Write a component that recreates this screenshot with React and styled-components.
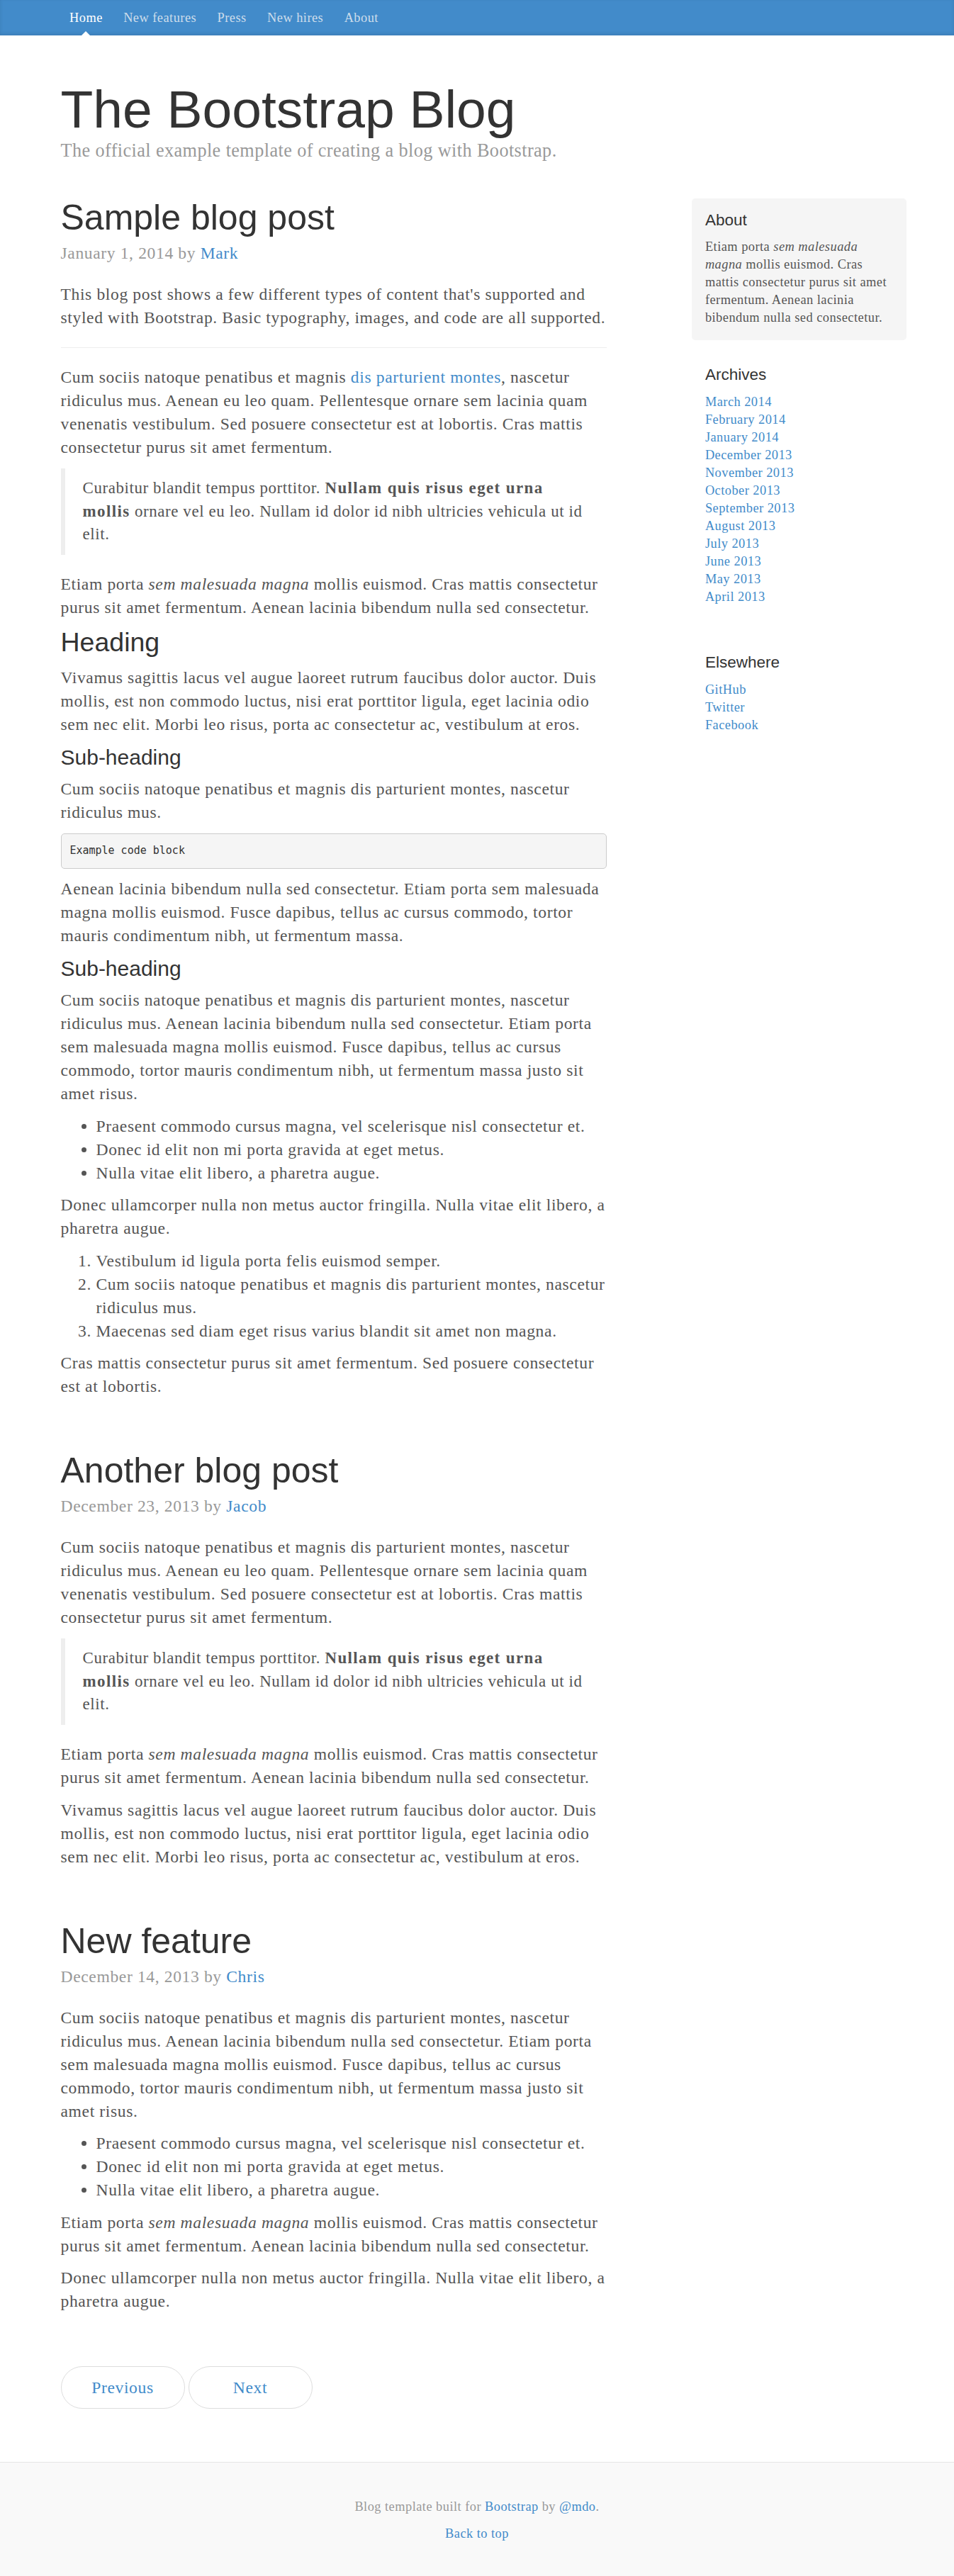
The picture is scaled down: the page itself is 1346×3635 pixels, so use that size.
import React from 'react'
import styled, { createGlobalStyle, css } from 'styled-components'

// the reference is Bootstrap's blog example seen at 125%, so every value is the bootstrap one * 1.25
// Georgia is missing here: Liberation Serif a little larger and tracked out keeps the same line breaks

const GlobalStyle = createGlobalStyle`
  * { box-sizing: border-box; }
  body {
    margin: 0;
    background: #fff;
    color: #555;
    font-family: "Liberation Serif", "Times New Roman", serif;
  }
  a { color: #428bca; text-decoration: none; }
`

const serif = (size, track = 0.027) => css`
  font-size: ${size * 1.05}px;
  letter-spacing: ${(size * track).toFixed(2)}px;
`

const sans = css`
  font-family: "Liberation Sans", Arial, sans-serif;
  font-weight: 400;
  color: #333;
  letter-spacing: 0;
`

const Masthead = styled.div`
  background-color: #428bca;
  box-shadow: inset 0 -2px 5px rgba(0, 0, 0, 0.1);
`

const Container = styled.div`
  width: 1212.5px;
  margin: 0 auto;
  padding: 0 18.75px;
`

const Nav = styled.nav`
  display: flex;
  gap: 4.4px;
`

const NavItem = styled.a`
  position: relative;
  display: block;
  padding: 12.5px;
  ${serif(17.5)}
  line-height: 25px;
  color: ${(p) => (p.$active ? '#fff' : '#cdddeb')};

  ${(p) =>
    p.$active &&
    css`
      &::after {
        content: '';
        position: absolute;
        bottom: 0;
        left: 50%;
        margin-left: -6.25px;
        border-style: solid;
        border-color: transparent;
        border-width: 0 6.25px 6.25px;
        border-bottom-color: #fff;
      }
    `}
`

const Header = styled.header`
  padding: 25px 0;
`

const BlogTitle = styled.h1`
  ${sans}
  margin: 37.5px 0 0;
  font-size: 75px;
  line-height: 82.5px;
`

const Description = styled.p`
  margin: 0 0 25px;
  ${serif(25, 0.016)}
  line-height: 35px;
  color: #999;
`

const Row = styled.div`
  display: grid;
  grid-template-columns: 770.8px 265.6px;
  column-gap: 138.6px;
  align-items: start;
`

const Main = styled.main`
  ${serif(22.5)}
  line-height: 33px;
`

const Post = styled.article`
  margin-bottom: 75px;
`

const PostTitle = styled.h2`
  ${sans}
  margin: 0 0 6.25px;
  font-size: 50px;
  line-height: 55px;
`

const Meta = styled.p`
  margin: 0 0 25px;
  color: #999;
`

const P = styled.p`
  margin: 0 0 12.5px;
`

const Rule = styled.hr`
  margin: 25px 0;
  border: 0;
  border-top: 1px solid #eee;
`

const Quote = styled.blockquote`
  margin: 0 0 25px;
  padding: 12.5px 25px;
  border-left: 6.25px solid #eee;
  ${serif(21.875)}
  line-height: 32.4px;

  & p {
    margin: 0;
  }
  & strong {
    letter-spacing: 1.4px;
  }
`

const Heading = styled.h2`
  ${sans}
  margin: 0 0 12.5px;
  font-size: 37.5px;
  line-height: 41.25px;
`

const SubHeading = styled.h3`
  ${sans}
  margin: 0 0 12.5px;
  font-size: 30px;
  line-height: 33px;
`

const Code = styled.pre`
  margin: 0 0 12.5px;
  padding: 11.875px;
  font-family: "Liberation Mono", "DejaVu Sans Mono", monospace;
  font-size: 15px;
  line-height: 23.2px;
  letter-spacing: 0;
  color: #333;
  background-color: #f5f5f5;
  border: 1px solid #ccc;
  border-radius: 5px;
`

const listStyle = css`
  margin: 0 0 12.5px;
  padding-left: 50px;
`
const Bullets = styled.ul`
  ${listStyle}
`
const Numbers = styled.ol`
  ${listStyle}
`

const Pager = styled.ul`
  display: flex;
  gap: 5px;
  margin: 25px 0 75px;
  padding: 0;
  list-style: none;
`

const PagerLink = styled.a`
  display: block;
  width: 175px;
  padding: 12.5px 25px;
  text-align: center;
  background-color: #fff;
  border: 1px solid #ddd;
  border-radius: 37.5px;
`

const Sidebar = styled.aside`
  ${serif(17.5)}
  line-height: 25px;
`

const Module = styled.div`
  margin: 0 -18.75px 18.75px;
  padding: 18.75px;
  ${(p) =>
    p.$inset &&
    css`
      background-color: #f5f5f5;
      border-radius: 5px;
    `}

  & p {
    margin: 0;
  }
`

const ModuleTitle = styled.h4`
  ${sans}
  margin: 0 0 12.5px;
  font-size: 22.5px;
  line-height: 24.75px;
`

const LinkList = styled.ol`
  margin: 0 0 12.5px;
  padding: 0;
  list-style: none;
`

const Footer = styled.footer`
  padding: 50px 0;
  ${serif(17.5)}
  line-height: 25px;
  color: #999;
  text-align: center;
  background-color: #f9f9f9;
  border-top: 1px solid #e5e5e5;

  & p {
    margin: 0 0 12.5px;
  }
  & p:last-child {
    margin-bottom: 0;
  }
`

const navItems = ['Home', 'New features', 'Press', 'New hires', 'About']

const archives = [
  'March 2014',
  'February 2014',
  'January 2014',
  'December 2013',
  'November 2013',
  'October 2013',
  'September 2013',
  'August 2013',
  'July 2013',
  'June 2013',
  'May 2013',
  'April 2013',
]

const elsewhere = ['GitHub', 'Twitter', 'Facebook']

const cumSociis =
  'Cum sociis natoque penatibus et magnis dis parturient montes, nascetur ridiculus mus. Aenean lacinia bibendum nulla sed consectetur. Etiam porta sem malesuada magna mollis euismod. Fusce dapibus, tellus ac cursus commodo, tortor mauris condimentum nibh, ut fermentum massa justo sit amet risus.'

const vivamus =
  'Vivamus sagittis lacus vel augue laoreet rutrum faucibus dolor auctor. Duis mollis, est non commodo luctus, nisi erat porttitor ligula, eget lacinia odio sem nec elit. Morbi leo risus, porta ac consectetur ac, vestibulum at eros.'

function Blockquote() {
  return (
    <Quote>
      <p>
        Curabitur blandit tempus porttitor. <strong>Nullam quis risus eget urna mollis</strong> ornare vel eu leo.
        Nullam id dolor id nibh ultricies vehicula ut id elit.
      </p>
    </Quote>
  )
}

function EtiamPorta() {
  return (
    <P>
      Etiam porta <em>sem malesuada magna</em> mollis euismod. Cras mattis consectetur purus sit amet fermentum.
      Aenean lacinia bibendum nulla sed consectetur.
    </P>
  )
}

function BulletList() {
  return (
    <Bullets>
      <li>Praesent commodo cursus magna, vel scelerisque nisl consectetur et.</li>
      <li>Donec id elit non mi porta gravida at eget metus.</li>
      <li>Nulla vitae elit libero, a pharetra augue.</li>
    </Bullets>
  )
}

function PostHead({ title, date, author }) {
  return (
    <>
      <PostTitle>{title}</PostTitle>
      <Meta>
        {date} by <a href="#">{author}</a>
      </Meta>
    </>
  )
}

export default function App() {
  return (
    <>
      <GlobalStyle />
      <Masthead>
        <Container>
          <Nav>
            {navItems.map((item, i) => (
              <NavItem key={item} href="#" $active={i === 0}>
                {item}
              </NavItem>
            ))}
          </Nav>
        </Container>
      </Masthead>

      <Container>
        <Header>
          <BlogTitle>The Bootstrap Blog</BlogTitle>
          <Description>The official example template of creating a blog with Bootstrap.</Description>
        </Header>

        <Row>
          <Main>
            <Post>
              <PostHead title="Sample blog post" date="January 1, 2014" author="Mark" />
              <P>
                This blog post shows a few different types of content that's supported and styled with Bootstrap.
                Basic typography, images, and code are all supported.
              </P>
              <Rule />
              <P>
                Cum sociis natoque penatibus et magnis <a href="#">dis parturient montes</a>, nascetur ridiculus mus.
                Aenean eu leo quam. Pellentesque ornare sem lacinia quam venenatis vestibulum. Sed posuere consectetur
                est at lobortis. Cras mattis consectetur purus sit amet fermentum.
              </P>
              <Blockquote />
              <EtiamPorta />
              <Heading>Heading</Heading>
              <P>{vivamus}</P>
              <SubHeading>Sub-heading</SubHeading>
              <P>Cum sociis natoque penatibus et magnis dis parturient montes, nascetur ridiculus mus.</P>
              <Code>
                <code>Example code block</code>
              </Code>
              <P>
                Aenean lacinia bibendum nulla sed consectetur. Etiam porta sem malesuada magna mollis euismod. Fusce
                dapibus, tellus ac cursus commodo, tortor mauris condimentum nibh, ut fermentum massa.
              </P>
              <SubHeading>Sub-heading</SubHeading>
              <P>{cumSociis}</P>
              <BulletList />
              <P>Donec ullamcorper nulla non metus auctor fringilla. Nulla vitae elit libero, a pharetra augue.</P>
              <Numbers>
                <li>Vestibulum id ligula porta felis euismod semper.</li>
                <li>Cum sociis natoque penatibus et magnis dis parturient montes, nascetur ridiculus mus.</li>
                <li>Maecenas sed diam eget risus varius blandit sit amet non magna.</li>
              </Numbers>
              <P>Cras mattis consectetur purus sit amet fermentum. Sed posuere consectetur est at lobortis.</P>
            </Post>

            <Post>
              <PostHead title="Another blog post" date="December 23, 2013" author="Jacob" />
              <P>
                Cum sociis natoque penatibus et magnis dis parturient montes, nascetur ridiculus mus. Aenean eu leo
                quam. Pellentesque ornare sem lacinia quam venenatis vestibulum. Sed posuere consectetur est at
                lobortis. Cras mattis consectetur purus sit amet fermentum.
              </P>
              <Blockquote />
              <EtiamPorta />
              <P>{vivamus}</P>
            </Post>

            <Post>
              <PostHead title="New feature" date="December 14, 2013" author="Chris" />
              <P>{cumSociis}</P>
              <BulletList />
              <EtiamPorta />
              <P>Donec ullamcorper nulla non metus auctor fringilla. Nulla vitae elit libero, a pharetra augue.</P>
            </Post>

            <Pager>
              <li>
                <PagerLink href="#">Previous</PagerLink>
              </li>
              <li>
                <PagerLink href="#">Next</PagerLink>
              </li>
            </Pager>
          </Main>

          <Sidebar>
            <Module $inset>
              <ModuleTitle>About</ModuleTitle>
              <p>
                Etiam porta <em>sem malesuada magna</em> mollis euismod. Cras mattis consectetur purus sit amet
                fermentum. Aenean lacinia bibendum nulla sed consectetur.
              </p>
            </Module>
            <Module>
              <ModuleTitle>Archives</ModuleTitle>
              <LinkList>
                {archives.map((m) => (
                  <li key={m}>
                    <a href="#">{m}</a>
                  </li>
                ))}
              </LinkList>
            </Module>
            <Module>
              <ModuleTitle>Elsewhere</ModuleTitle>
              <LinkList>
                {elsewhere.map((m) => (
                  <li key={m}>
                    <a href="#">{m}</a>
                  </li>
                ))}
              </LinkList>
            </Module>
          </Sidebar>
        </Row>
      </Container>

      <Footer>
        <p>
          Blog template built for <a href="#">Bootstrap</a> by <a href="#">@mdo</a>.
        </p>
        <p>
          <a href="#">Back to top</a>
        </p>
      </Footer>
    </>
  )
}
